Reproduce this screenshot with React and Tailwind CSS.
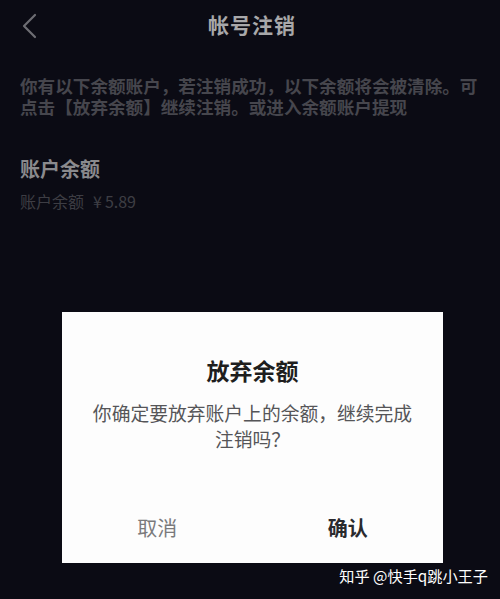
import React from 'react'

const FONT = { fontFamily: '"Noto Sans CJK SC", "Noto Sans", sans-serif' }

function BackIcon() {
  return (
    <svg width="16" height="26" viewBox="0 0 16 26" fill="none">
      <polyline points="14,2 3,13 14,24" stroke="#7a7a80" strokeWidth="2.2" strokeLinecap="round" strokeLinejoin="round" />
    </svg>
  )
}

export default function App() {
  return (
    <div className="relative w-[500px] h-[599px] overflow-hidden bg-[#0d0d17]" style={FONT}>
      {/* top bar */}
      <div className="relative h-[50px] flex items-center justify-center">
        <button className="absolute left-[21px] top-[13px]">
          <BackIcon />
        </button>
        <h1 className="text-[21px] font-bold text-[#bcbcbe] tracking-[1px] ml-[4px] -mt-[1px]">帐号注销</h1>
      </div>

      <div className="px-[20px]">
        <p className="mt-[25px] text-[17.6px] leading-[21px] font-bold text-[#4f4f56]">
          你有以下余额账户，若注销成功，以下余额将会被清除。可点击【放弃余额】继续注销。或进入余额账户提现
        </p>

        <div className="mt-[38px] text-[20px] leading-[28px] font-bold text-[#9a9a9e]">账户余额</div>
        <div className="mt-[7px] flex text-[16px] leading-[22px] text-[#45454c]">
          <span>账户余额</span>
          <span className="ml-[9px]">¥</span>
          <span className="ml-[3px]">5.89</span>
        </div>
      </div>

      {/* confirm dialog */}
      <div className="absolute inset-0 bg-black/10 pt-[312px] pl-[62px]">
        <div className="w-[381px] h-[251px] bg-[#fdfdfd] flex flex-col items-center">
          <div className="mt-[42px] text-[23px] leading-[32px] font-bold text-[#1e1e1e]">放弃余额</div>
          <div className="mt-[14px] px-[28px] text-center text-[18.8px] leading-[26px] text-[#555558]">
            你确定要放弃账户上的余额，继续完成注销吗？
          </div>
          <div className="mt-auto w-full grid grid-cols-2 h-[64px] pb-[6px]">
            <button className="flex items-center justify-center text-[20px] text-[#7a7a7c]">取消</button>
            <button className="flex items-center justify-center text-[20px] font-bold text-[#2a2a2e]">确认</button>
          </div>
        </div>
      </div>

      <div className="absolute right-[12px] top-[564px] text-[15.2px] leading-[22px] text-white">
        知乎 @快手q跳小王子
      </div>
    </div>
  )
}
